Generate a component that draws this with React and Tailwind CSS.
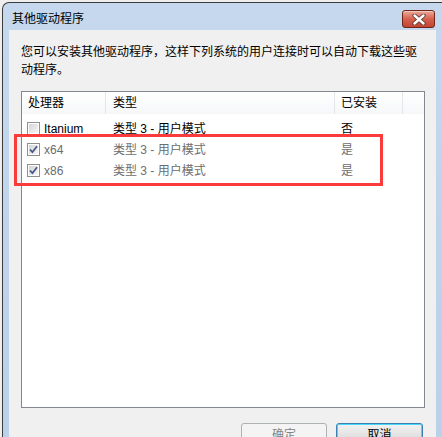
import React from 'react';

const rows = [
    { name: 'Itanium', type: '类型 3 - 用户模式', installed: '否', checked: false, muted: false },
    { name: 'x64', type: '类型 3 - 用户模式', installed: '是', checked: true, muted: true },
    { name: 'x86', type: '类型 3 - 用户模式', installed: '是', checked: true, muted: true },
];

const CheckBox = ({ checked }) => (
    <span className="w-[13px] h-[13px] border border-[#8f8f8f] bg-white p-[1px] flex shrink-0">
        <span className="flex-1 bg-linear-to-br from-[#d4d4d4] to-[#f7f7f7] flex items-center justify-center">
            {checked && (
                <svg width="9" height="9" viewBox="0 0 9 9">
                    <path d="M1 4.5 L3.4 7.2 L8 1.2" fill="none" stroke="#46588a" strokeWidth="1.8" />
                </svg>
            )}
        </span>
    </span>
);

const CloseButton = () => (
    <div className="w-[33px] h-[18px] rounded-[3px] border border-[#6e2419] bg-linear-to-b from-[#e9a998] via-[#d4604e] to-[#c24532] flex items-center justify-center shadow-[inset_0_1px_0_#f3c7bb]">
        <svg width="14" height="11" viewBox="0 0 14 11">
            <path d="M2.5 1.5 L11.5 9.5 M11.5 1.5 L2.5 9.5" stroke="#5d3a34" strokeWidth="4.2" strokeLinecap="round" />
            <path d="M2.5 1.5 L11.5 9.5 M11.5 1.5 L2.5 9.5" stroke="#ffffff" strokeWidth="2.4" strokeLinecap="round" />
        </svg>
    </div>
);

const App = () => {
    return (
        <div className="relative w-[442px] h-[437px] overflow-hidden bg-[#eeeeee] pt-[2px] pl-[2px] font-['Liberation_Sans','Noto_Sans_CJK_SC',sans-serif] text-[12px] text-black">
            <div className="h-full flex flex-col border-t border-l border-[#3c3c3c] rounded-tl-[7px] bg-linear-to-b from-[#c5d8ee] to-[#bad1ea]">
                {/* title bar */}
                <div className="h-[27px] shrink-0 flex justify-between pl-[9px] pr-[7px]">
                    <span className="pt-[9px] leading-[14px] text-[12px]">其他驱动程序</span>
                    <div className="pt-[7px]">
                        <CloseButton />
                    </div>
                </div>

                {/* client area */}
                <div className="flex-1 ml-[6px] mr-[6px] bg-[#f0f0f0] flex flex-col px-[12px] pt-[13px]">
                    <p className="w-[410px] leading-[18px]">
                        <span className="block whitespace-nowrap">您可以安装其他驱动程序，这样下列系统的用户连接时可以自动下载这些驱</span>
                        <span className="block">动程序。</span>
                    </p>

                    <div className="mt-[12px] w-[404px] h-[317px] border border-[#828790] bg-white flex flex-col">
                        <div className="h-[22px] flex bg-linear-to-b from-white to-[#f6f7f9]">
                            <div className="w-[84px] border-r border-[#e3e6ea] pl-[6px] flex items-center">处理器</div>
                            <div className="w-[229px] border-r border-[#e3e6ea] pl-[7px] flex items-center">类型</div>
                            <div className="w-[68px] border-r border-[#e3e6ea] pl-[6px] flex items-center">已安装</div>
                            <div className="flex-1" />
                        </div>
                        <div className="pt-[4px]">
                            {rows.map((r) => (
                                <div
                                    key={r.name}
                                    className={`h-[21px] flex items-center ${r.muted ? 'text-[#6d6d6d]' : 'text-black'}`}
                                >
                                    <div className="w-[84px] pl-[5px] flex items-center gap-[4px]">
                                        <CheckBox checked={r.checked} />
                                        <span>{r.name}</span>
                                    </div>
                                    <div className="w-[229px] pl-[7px]">{r.type}</div>
                                    <div className="w-[68px] pl-[6px]">{r.installed}</div>
                                </div>
                            ))}
                        </div>
                    </div>

                    <div className="mt-[15px] flex justify-end gap-[9px] pr-[1px]">
                        <button className="w-[86px] h-[23px] rounded-[3px] border border-[#adb2b5] bg-[#f4f4f4] text-[#838383] flex items-center justify-center">
                            确定
                        </button>
                        <button className="w-[87px] h-[23px] rounded-[3px] border border-[#3c7fb1] shadow-[inset_0_0_0_1px_#48d8fb] bg-linear-to-b from-[#f2f2f2] to-[#d6d6d6] text-black flex items-center justify-center">
                            取消
                        </button>
                    </div>
                </div>
            </div>

            {/* annotation */}
            <div className="absolute left-[14px] top-[134px] w-[369px] h-[52px] border-[3px] border-[#fb3b3b]" />
        </div>
    );
};

export default App;
